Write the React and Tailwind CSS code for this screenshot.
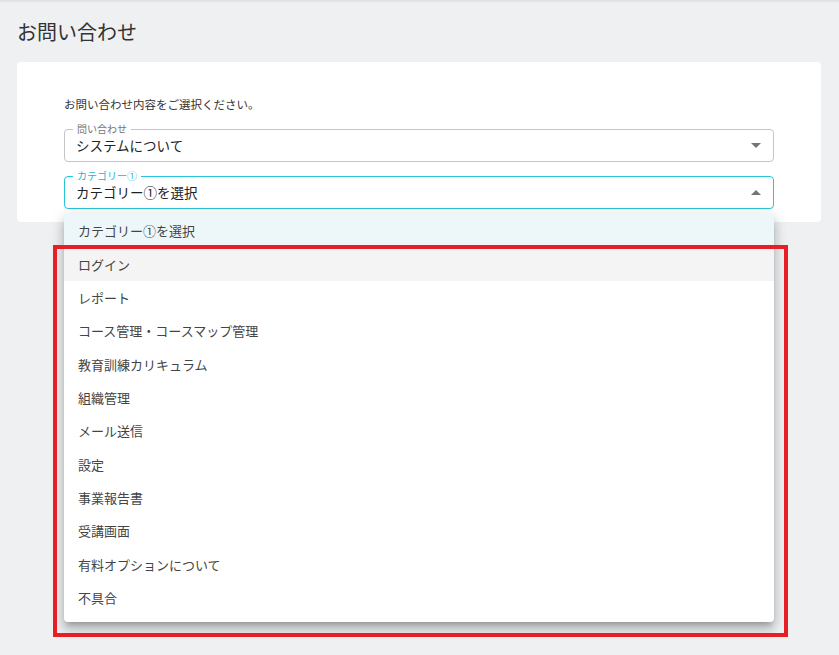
const font = { fontFamily: '"Noto Sans CJK JP", "Noto Sans", sans-serif' };

const categories = [
  "ログイン",
  "レポート",
  "コース管理・コースマップ管理",
  "教育訓練カリキュラム",
  "組織管理",
  "メール送信",
  "設定",
  "事業報告書",
  "受講画面",
  "有料オプションについて",
  "不具合",
];

function Caret({ up }) {
  return (
    <span
      className={
        "h-0 w-0 border-x-[5px] border-x-transparent " +
        (up ? "border-b-[5px] border-b-[#757575]" : "border-t-[5px] border-t-[#757575]")
      }
    />
  );
}

function SelectBox({ label, value, focused }) {
  return (
    <div
      className={
        "relative flex h-[33px] items-center justify-between rounded-[4px] border bg-white pl-[11px] pr-[12px] " +
        (focused ? "border-[#26c6da]" : "border-[#c4c4c4]")
      }
    >
      <span
        className={
          "absolute left-[8px] top-[-8px] bg-white px-[4px] text-[10px] leading-[14px] " +
          (focused ? "text-[#26b5cc]" : "text-[#757575]")
        }
      >
        {label}
      </span>
      <span className="-mt-[2px] text-[13.5px] leading-[20px] text-[#222]">{value}</span>
      <Caret up={focused} />
    </div>
  );
}

export default function App() {
  return (
    <div className="relative min-h-[655px] bg-[#eef0f2]" style={font}>
      <div className="h-[3px] bg-gradient-to-b from-[#dcdee1] to-[#eef0f2]" />
      <div className="pl-[17px] pr-[18px]">
        <h1 className="pt-[15px] text-[20px] leading-[28px] text-[#333]">お問い合わせ</h1>
        <div className="mt-[16px] rounded-[4px] bg-white px-[47px] pt-[33px] pb-[13px]">
          <p className="text-[11.5px] leading-[18px] text-[#333]">
            お問い合わせ内容をご選択ください。
          </p>
          <div className="mt-[16px] flex flex-col gap-[14px]">
            <SelectBox label="問い合わせ" value="システムについて" />
            <SelectBox label="カテゴリー①" value="カテゴリー①を選択" focused />
          </div>
        </div>
      </div>

      <ul className="absolute left-[64px] top-[214px] flex w-[710px] flex-col rounded-[4px] bg-white pb-[8px] text-[13px] text-[#444] shadow-[0_5px_5px_-3px_rgba(0,0,0,0.2),0_8px_10px_1px_rgba(0,0,0,0.14),0_3px_14px_2px_rgba(0,0,0,0.12)]">
        <li className="flex h-[34px] items-center bg-[#edf7fa] px-[14px]">カテゴリー①を選択</li>
        {categories.map((c, i) => (
          <li
            key={c}
            className={
              "flex h-[33.3px] items-center px-[14px] " + (i === 0 ? "bg-[#f4f4f4]" : "")
            }
          >
            {c}
          </li>
        ))}
      </ul>

      <div className="pointer-events-none absolute left-[53px] top-[245px] h-[392px] w-[735px] border-[4px] border-[#e81e27]" />
    </div>
  );
}
